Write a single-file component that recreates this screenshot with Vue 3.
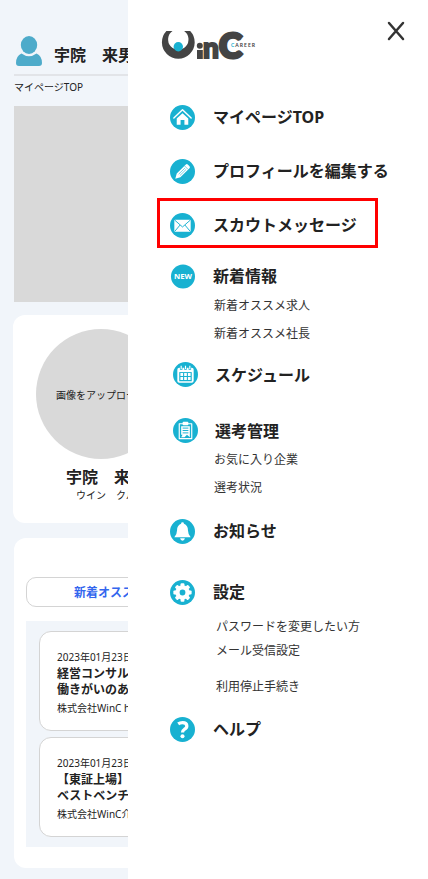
<script setup>
const menu = [
  { icon: 'home', label: 'マイページTOP', space: 'first' },
  { icon: 'pencil', label: 'プロフィールを編集する', space: 's29' },
  { icon: 'mail', label: 'スカウトメッセージ', space: 's29', marked: true },
  { icon: 'new', label: '新着情報', space: 's26', subs: ['新着オススメ求人', '新着オススメ社長'] },
  { icon: 'calendar', label: 'スケジュール', space: 's14', inset: true },
  { icon: 'clipboard', label: '選考管理', space: 's31', inset: true, subs: ['お気に入り企業', '選考状況'] },
  { icon: 'bell', label: 'お知らせ', space: 's17' },
  { icon: 'gear', label: '設定', space: 's36', wide: true, subs: ['パスワードを変更したい方', 'メール受信設定', '利用停止手続き'] },
  { icon: 'help', label: 'ヘルプ', space: 's18' }
]
const jobs = [
  { date: '2023年01月23日', title: ['経営コンサル', '働きがいのある'], company: '株式会社WinC h' },
  { date: '2023年01月23日', title: ['【東証上場】', 'ベストベンチャ'], company: '株式会社WinC介' }
]
const teeth = [0, 45, 90, 135, 180, 225, 270, 315]
</script>

<template>
  <div class="screen">
    <main class="page">
      <header class="user">
        <svg class="avatar" viewBox="0 0 26 31" aria-hidden="true">
          <ellipse cx="13" cy="9" rx="8.2" ry="9" />
          <path d="M5.5 17.5Q13 23 20.5 17.5Q26 20 26 27Q26 30 23 30H3Q0 30 0 27Q0 20 5.5 17.5Z" />
        </svg>
        <span class="user-name">宇院　来男</span>
      </header>
      <p class="crumb">マイページTOP</p>
      <div class="banner"></div>
      <section class="card profile">
        <button type="button" class="photo">画像をアップロード</button>
        <h2>宇院　来男</h2>
        <p>ウイン　クル</p>
      </section>
      <section class="card jobs">
        <button type="button" class="tab">新着オススメ</button>
        <div class="job-list">
          <article v-for="job in jobs" :key="job.company" class="job">
            <time>{{ job.date }}</time>
            <h3><span v-for="line in job.title" :key="line">{{ line }}</span></h3>
            <p>{{ job.company }}</p>
          </article>
        </div>
      </section>
    </main>

    <aside class="drawer">
      <div class="top">
        <svg class="logo" viewBox="0 0 98 32" role="img" aria-label="WinC CAREER">
          <path class="ink" d="M5.4 2H11.5A10.2 10.2 0 1 0 23.1 2H29.2A16.4 16.4 0 1 1 5.4 2Z" />
          <circle class="accent" cx="17.3" cy="17.7" r="4.7" />
          <circle class="ink" cx="38.8" cy="16.8" r="3" />
          <rect class="ink" x="36" y="21" width="5.8" height="9" />
          <text class="ink letter-n" x="42" y="29">n</text>
          <text class="ink letter-c" x="58" y="29">C</text>
          <text class="career" x="70" y="18"><tspan class="accent">C</tspan>AREER</text>
        </svg>
        <button type="button" class="close" aria-label="閉じる">
          <svg viewBox="0 0 18 20" aria-hidden="true"><path d="M2 2L16 18M16 2L2 18" /></svg>
        </button>
      </div>

      <nav>
        <ul class="menu">
          <li v-for="item in menu" :key="item.icon" :class="item.space">
            <a href="#" class="item" :class="{ marked: item.marked, inset: item.inset }">
              <svg class="icon" viewBox="0 0 26 26" aria-hidden="true">
                <circle v-if="item.icon === 'new'" class="disc" cx="13.5" cy="13" r="12.5" />
                <circle v-else class="disc" cx="13" cy="13" r="13" />
                <g v-if="item.icon === 'home'">
                  <path class="line" d="M4 13.5L13 5L22 13.5" />
                  <path class="fill" d="M7 14L13 8.5L19 14V20.5H15V15.5H11V20.5H7Z" />
                </g>
                <g v-else-if="item.icon === 'pencil'">
                  <path class="fill" d="M5.5 20.5L7 15.2L16.5 5.7Q17.5 4.7 18.5 5.7L20.3 7.5Q21.3 8.5 20.3 9.5L10.8 19Z" />
                  <path class="cut fine" d="M15.2 7.2L18.8 10.8M9 15.8L15.5 9.500M10.300 17.200L16.800 10.800" />
                </g>
                <g v-else-if="item.icon === 'mail'">
                  <rect class="fill" x="4.5" y="7" width="17" height="12.5" rx="1" />
                  <path class="cut" d="M5 7.5L13 14.5L21 7.5M5 19L10.5 12.5M21 19L15.5 12.5" />
                </g>
                <text v-else-if="item.icon === 'new'" class="new" x="13.5" y="16">NEW</text>
                <g v-else-if="item.icon === 'calendar'">
                  <rect class="fill" x="4.5" y="6" width="17" height="15.5" rx="2" />
                  <path class="cut gap" d="M8.5 4.5V8M13 4.5V8M17.5 4.5V8" />
                  <path class="pin" d="M8.5 4V7.300M13 4V7.300M17.5 4V7.300" />
                  <rect class="hole" x="6.5" y="10.5" width="13" height="9.5" />
                  <path class="fill" d="M7.7 11.5h2.8v3H7.7zM11.6 11.5h2.8v3h-2.8zM15.5 11.5h2.8v3h-2.8zM7.7 15.7h2.8v3H7.7zM11.6 15.7h2.8v3h-2.8zM15.5 15.7h2.8v3h-2.8z" />
                </g>
                <g v-else-if="item.icon === 'clipboard'">
                  <path class="line thin" d="M6.5 6H19.5V21.5H6.5Z" />
                  <rect class="fill" x="10" y="4" width="6" height="3.5" rx="1" />
                  <path class="fill" d="M8.5 8.5H17.5V20L14.5 17.5L12 20H8.5L10 17.5H8.5Z" />
                  <path class="cut" d="M10 10.5H16M10 13H16M10 15.5H16" />
                </g>
                <g v-else-if="item.icon === 'bell'">
                  <path class="fill" d="M13 3.5Q14.5 3.5 14.5 5Q18.7 6.5 18.7 12Q18.7 16 21.5 19H4.5Q7.3 16 7.3 12Q7.3 6.5 11.5 5Q11.5 3.5 13 3.5Z" />
                  <path class="fill" d="M10.5 20H15.5Q15 22.5 13 22.5Q11 22.5 10.5 20Z" />
                </g>
                <g v-else-if="item.icon === 'gear'">
                  <circle class="fill" cx="13" cy="13" r="7.5" />
                  <rect v-for="a in teeth" :key="a" class="fill" x="11" y="3.5" width="4" height="5" rx="1" :transform="`rotate(${a} 13 13)`" />
                  <circle class="hole" cx="13" cy="13" r="3" />
                </g>
                <g v-else>
                  <path class="question" d="M8.5 7.2Q10.5 5.8 13 5.8Q17.5 5.8 17.5 9.3Q17.5 11.5 15 12.8Q13 14 13 16.2" />
                  <circle class="fill" cx="13" cy="20" r="2.1" />
                </g>
              </svg>
              <span>{{ item.label }}</span>
            </a>
            <ul v-if="item.subs" class="subs" :class="{ wide: item.wide }">
              <li v-for="sub in item.subs" :key="sub"><a href="#">{{ sub }}</a></li>
            </ul>
          </li>
        </ul>
      </nav>
    </aside>
  </div>
</template>

<style>
body {
  margin: 0;
  background: #f1f5fa;
}
</style>

<style scoped>
.screen {
  position: relative;
  min-height: 100vh;
  overflow: hidden;
  background: #f1f5fa;
  color: #222;
  font-family: "Noto Sans", "Noto Sans CJK JP", sans-serif;
}
h2, h3, p, ul {
  margin: 0;
  padding: 0;
}
ul { list-style: none; }
a { color: inherit; text-decoration: none; }
button { font-family: inherit; color: inherit; padding: 0; }
.page {
  padding: 36px 14px 11px;
}
.user {
  display: flex;
  align-items: flex-start;
  gap: 12px;
  height: 38px;
  padding-left: 2px;
  border-bottom: 2px solid #e2e4e8;
}
.avatar { width: 26px; height: 31px; fill: #4eabca; }
.user-name { font-size: 16px; font-weight: 700; line-height: 38px; }
.crumb { font-size: 10px; line-height: 22px; margin-bottom: 8px; }
.banner { height: 196px; background: #d9d9d9; }
.card { background: #fff; border-radius: 12px; }
.profile {
  margin: 13px 0 0 -1px;
  padding: 14px 23px 22px;
}
.photo {
  display: block;
  width: 130px;
  height: 130px;
  border: 0;
  border-radius: 50%;
  background: #d9d9d9;
  font-size: 10px;
}
.profile h2 { font-size: 16px; line-height: 24px; padding: 6px 0 0 30px; }
.profile p { font-size: 10px; line-height: 12px; padding-left: 40px; }
.jobs { margin-top: 15px; padding: 39px 12px 21px; }
.tab {
  display: block;
  width: 100%;
  height: 30px;
  border: 1px solid #d4d4d4;
  border-radius: 10px;
  background: #fff;
  color: #3366ee;
  font-size: 12px;
  font-weight: 700;
  text-align: left;
  padding-left: 47px;
}
.job-list {
  display: flex;
  flex-direction: column;
  gap: 6px;
  margin-top: 14px;
  padding: 10px 13px;
  background: #f1f5fa;
}
.job {
  border: 1px solid #d4d4d4;
  border-radius: 12px;
  background: #fff;
  padding: 17px 17px 14px;
}
.job time, .job p { display: block; font-size: 10px; line-height: 16px; }
.job h3 { font-size: 12px; line-height: 16px; margin: 1px 0 2px; }
.job h3 span { display: block; }
.drawer {
  position: absolute;
  top: 0;
  right: 0;
  bottom: 0;
  left: 128px;
  background: #fff;
}
.top {
  display: flex;
  justify-content: space-between;
  align-items: flex-start;
  height: 84px;
  padding: 21px 23px 0 33px;
}
.logo { width: 98px; height: 32px; margin-top: 8px; overflow: visible; }
.ink { fill: #444; }
.accent { fill: #18b1d1; }
.letter-n { font: 900 28px "Lato", sans-serif; stroke: #444; stroke-width: 2; }
.letter-c { font: 900 35px "Lato", sans-serif; stroke: #444; stroke-width: 3; }
.career { font: 700 5px "Lato", sans-serif; letter-spacing: 1px; fill: #444; }
.career .accent { fill: #18b1d1; }
.close { width: 18px; height: 20px; border: 0; background: none; }
.close svg { display: block; fill: none; stroke: #333; stroke-width: 2.5; stroke-linecap: round; }
.menu { padding-left: 42px; }
.s14 { margin-top: 14px; }
.s17 { margin-top: 17px; }
.s18 { margin-top: 18px; }
.s26 { margin-top: 26px; }
.s29 { margin-top: 29px; }
.s31 { margin-top: 31px; }
.s36 { margin-top: 36px; }
.item {
  position: relative;
  display: flex;
  align-items: center;
  gap: 18px;
  height: 25px;
  font-size: 16px;
  font-weight: 700;
}
.item span { padding-bottom: 4px; }
.inset { padding-left: 3px; gap: 17px; }
.inset span { padding-bottom: 2px; }
.marked::after {
  content: "";
  position: absolute;
  top: -15px;
  left: -13px;
  width: 215px;
  height: 44px;
  border: 3px solid #f00;
}
.icon { flex: none; width: 25px; height: 25px; }
.disc, .hole { fill: #18b1d1; }
.fill { fill: #fff; }
.line { fill: none; stroke: #fff; stroke-width: 1.5; stroke-linecap: round; stroke-linejoin: round; }
.thin { stroke-width: 1.2; }
.cut { fill: none; stroke: #18b1d1; stroke-width: 1; }
.fine { stroke-width: 0.6; }
.gap { stroke-width: 2.6; }
.pin { fill: none; stroke: #fff; stroke-width: 1.2; }
.question { fill: none; stroke: #fff; stroke-width: 3.4; }
.new { fill: #fff; font-size: 8px; font-weight: 700; text-anchor: middle; }
.subs { padding: 3px 0 0 44px; font-size: 12px; line-height: 28px; color: #333; }
.wide { padding: 10px 0 0 46px; line-height: 24px; }
.wide li:last-child { margin-top: 12px; }
</style>
